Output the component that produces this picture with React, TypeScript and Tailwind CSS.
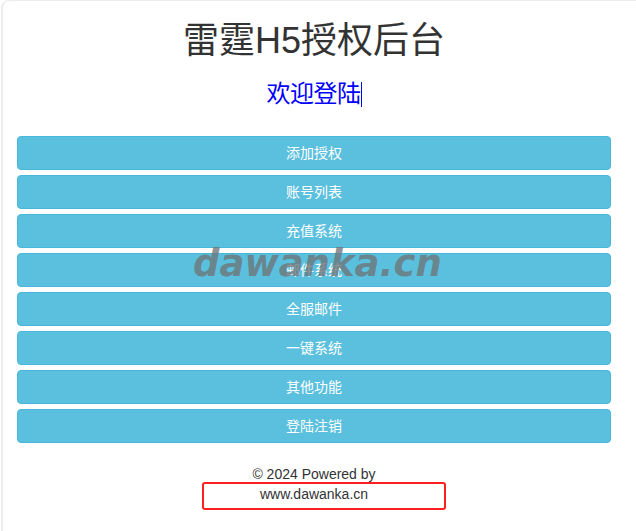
import React from "react";

const items = ["添加授权", "账号列表", "充值系统", "邮件系统", "全服邮件", "一键系统", "其他功能", "登陆注销"];

export default function App() {
  return (
    <div
      className="relative w-[636px] h-[531px] bg-white overflow-hidden"
      style={{ fontFamily: '"Liberation Sans", "Noto Sans CJK SC", sans-serif' }}
    >
      <div className="ml-px h-full border-l-2 border-t border-[#ececec] rounded-tl-lg">
        <div className="ml-[14px] w-[594px] flex flex-col">
          <h1 className="mt-[20px] text-[36px] leading-[40px] text-[#333] text-center">雷霆H5授权后台</h1>
          <div className="mt-[19px] h-[28px] flex justify-center items-center">
            <span className="text-[24px] leading-[28px] text-[#0000ff] tracking-[-0.5px]">欢迎登陆</span>
            <span className="inline-block w-px h-[25px] bg-[#0000ff]"></span>
          </div>
          <div className="mt-[28px] flex flex-col gap-[5px]">
            {items.map((t) => (
              <div
                key={t}
                className="h-[34px] rounded-[4px] bg-[#5bc0de] border border-[#46b8da] text-white text-[14px] flex items-center justify-center"
              >
                {t}
              </div>
            ))}
          </div>
          <div className="mt-[21px] flex flex-col items-center text-[14px] leading-[20px] text-[#333]">
            <div>© 2024 Powered by</div>
            <div className="ml-[20px] w-[244px] h-[28px] border-2 border-[#ff1f1f] rounded-[3px] flex justify-center items-start pr-[20px] -mt-[2px]">
              www.dawanka.cn
            </div>
          </div>
        </div>
      </div>
      <div
        className="absolute left-[193px] top-[240px] text-[37px] leading-[48px] italic font-bold text-[rgba(110,118,122,0.8)]"
        style={{ fontFamily: '"DejaVu Sans", sans-serif' }}
      >
        dawanka.cn
      </div>
    </div>
  );
}
